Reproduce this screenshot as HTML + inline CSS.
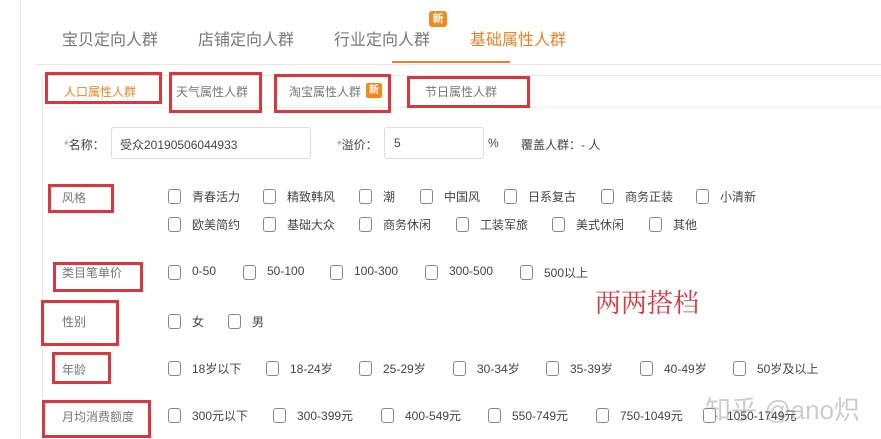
<!DOCTYPE html>
<html><head><meta charset="utf-8"><style>
body{margin:0;width:881px;height:439px;background:#fff;position:relative;overflow:hidden;font-family:"Liberation Sans","Noto Sans CJK SC",sans-serif;color:#555}
.a{position:absolute;white-space:nowrap}
.rb{position:absolute;border:3px solid #d9363e;box-sizing:border-box}
.cb{position:absolute;width:13px;height:15px;border:1px solid #888;border-radius:3px;box-sizing:border-box;background:#fff}
.t{font-size:12px;color:#444}
</style></head><body>
<div class="a" style="left:20px;top:0;width:1px;height:439px;background:#e6e6e6"></div>
<div class="a" style="left:42px;top:75px;width:1px;height:364px;background:#e6e6e6"></div>
<div class="a" style="left:36px;top:64px;width:845px;height:1px;background:#e6e6e6"></div>
<div class="a" style="left:62px;top:26px;font-size:16px;color:#777">宝贝定向人群</div>
<div class="a" style="left:198px;top:26px;font-size:16px;color:#777">店铺定向人群</div>
<div class="a" style="left:334px;top:26px;font-size:16px;color:#777">行业定向人群</div>
<div class="a" style="left:429px;top:11px;width:18px;height:16px;background:#f08c1e;border-radius:3px;color:#fff;font-size:11px;text-align:center;line-height:16px;font-weight:bold">新</div>
<div class="a" style="left:470px;top:26px;font-size:16px;color:#e8832a">基础属性人群</div>
<div class="a" style="left:392px;top:61px;width:118px;height:2px;background:#e8832a"></div>
<div class="a" style="left:42px;top:75px;width:839px;height:1px;background:#e6e6e6"></div>
<div class="a" style="left:42px;top:107px;width:839px;height:1px;background:#eee"></div>
<div class="a" style="left:64px;top:83px;font-size:12px;color:#e8832a">人口属性人群</div>
<div class="a" style="left:176px;top:83px;font-size:12px;color:#777">天气属性人群</div>
<div class="a" style="left:289px;top:83px;font-size:12px;color:#777">淘宝属性人群</div>
<div class="a" style="left:366px;top:83px;width:16px;height:15px;background:#f08c1e;border-radius:2px;color:#fff;font-size:10px;text-align:center;line-height:15px;font-weight:bold">新</div>
<div class="a" style="left:425px;top:83px;font-size:12px;color:#777">节日属性人群</div>
<div class="rb" style="left:45px;top:72px;width:117px;height:32px"></div>
<div class="rb" style="left:169px;top:72px;width:93px;height:41px"></div>
<div class="rb" style="left:274px;top:74px;width:117px;height:39px"></div>
<div class="rb" style="left:407px;top:76px;width:123px;height:32px"></div>
<div class="a t" style="left:64px;top:136px"><span style="color:#e8832a">*</span>名称：</div>
<div class="a" style="left:111px;top:127px;width:200px;height:32px;border:1px solid #ddd;border-radius:3px;box-sizing:border-box"></div>
<div class="a t" style="left:120px;top:136px">受众20190506044933</div>
<div class="a t" style="left:337px;top:136px"><span style="color:#e8832a">*</span>溢价：</div>
<div class="a" style="left:384px;top:127px;width:100px;height:32px;border:1px solid #ddd;border-radius:3px;box-sizing:border-box"></div>
<div class="a t" style="left:394px;top:136px">5</div>
<div class="a t" style="left:488px;top:136px">%</div>
<div class="a t" style="left:521px;top:136px">覆盖人群：- 人</div>

<div class="a t" style="left:62px;top:189px;color:#777">风格</div>
<div class="rb" style="left:48px;top:184px;width:66px;height:29px"></div>
<div class="a t" style="left:62px;top:264px;color:#777">类目笔单价</div>
<div class="rb" style="left:53px;top:262px;width:90px;height:30px"></div>
<div class="a t" style="left:62px;top:313px;color:#777">性别</div>
<div class="rb" style="left:41px;top:300px;width:78px;height:46px"></div>
<div class="a t" style="left:62px;top:361px;color:#777">年龄</div>
<div class="rb" style="left:52px;top:352px;width:59px;height:32px"></div>
<div class="a t" style="left:62px;top:408px;color:#777">月均消费额度</div>
<div class="rb" style="left:42px;top:400px;width:109px;height:38px"></div>

<div class="a" style="left:595px;top:283px;font-size:26px;color:#d9363e;font-family:'Liberation Serif','Noto Serif CJK SC',serif">两两搭档</div>
<div class="a" style="left:705px;top:390px;font-size:26px;color:#ccc">知乎 @ano炽</div>

<div id="rows"></div>
<script>
const rows=[
[196,[[168,"青春活力"],[263,"精致韩风"],[359,"潮"],[420,"中国风"],[504,"日系复古"],[601,"商务正装"],[696,"小清新"]]],
[224,[[168,"欧美简约"],[263,"基础大众"],[359,"商务休闲"],[456,"工装军旅"],[552,"美式休闲"],[649,"其他"]]],
[272,[[168,"0-50"],[243,"50-100"],[330,"100-300"],[425,"300-500"],[520,"500以上"]]],
[321,[[168,"女"],[228,"男"]]],
[368,[[168,"18岁以下"],[266,"18-24岁"],[359,"25-29岁"],[453,"30-34岁"],[546,"35-39岁"],[640,"40-49岁"],[733,"50岁及以上"]]],
[415,[[168,"300元以下"],[273,"300-399元"],[381,"400-549元"],[488,"550-749元"],[596,"750-1049元"],[703,"1050-1749元"]]]];
let h="";for(const [y,items] of rows)for(const [x,t] of items){h+=`<div class="cb" style="left:${x}px;top:${y-7}px"></div><div class="a t" style="left:${x+24}px;top:${y-8}px">${t}</div>`}
document.getElementById("rows").innerHTML=h;
</script>
</body></html>
